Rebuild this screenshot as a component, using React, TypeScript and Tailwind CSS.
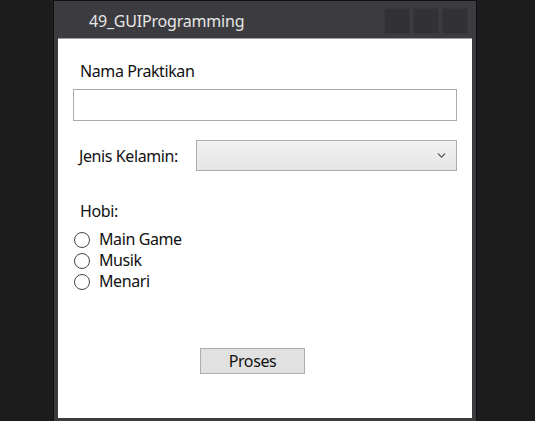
import { ChevronDown } from "lucide-react";

const hobbies = ["Main Game", "Musik", "Menari"];

export default function App() {
  return (
    <div
      className="w-[535px] h-[421px] overflow-hidden bg-[#1c1c1c] flex justify-start"
      style={{ fontFamily: '"Noto Sans", "Open Sans", sans-serif' }}
    >
      {/* Window */}
      <div className="ml-[53px] w-[424px] h-[440px] shrink-0 flex flex-col bg-[#3c3c40] border-x border-t border-[#111113]">
        {/* Title bar */}
        <div className="h-[37px] flex items-start shrink-0">
          <div className="ml-[35px] mt-[10px] text-[16px] leading-[20px] tracking-[-0.2px] text-[#e6e6e6]">
            49_GUIProgramming
          </div>
          <div className="ml-auto mr-[8px] mt-[7px] flex gap-[3px]">
            {[0, 1, 2].map((i) => (
              <div
                key={i}
                className="w-[26px] h-[26px] bg-[#323236] border border-[#38383c]"
              />
            ))}
          </div>
        </div>

        {/* Client area */}
        <div className="mx-[4px] h-[380px] bg-white border-t border-[#a0a0a0] flex flex-col text-[16px] tracking-[-0.4px] text-[#111]">
          <div className="ml-[22px] mt-[21px] leading-[22px]">Nama Praktikan</div>
          <div className="ml-[15px] mt-[7px] w-[384px] h-[32px] border border-[#ababab] bg-white" />

          <div className="mt-[19px] flex items-center">
            <div className="ml-[21px] w-[117px] leading-[22px]">Jenis Kelamin:</div>
            <div className="w-[261px] h-[31px] border border-[#acacac] bg-gradient-to-b from-[#f2f2f2] to-[#e5e5e5] flex items-center justify-end pr-[8px]">
              <ChevronDown className="w-[13px] h-[13px] text-[#555]" strokeWidth={2.5} />
            </div>
          </div>

          <div className="ml-[22px] mt-[29px] leading-[22px]">Hobi:</div>
          <div className="ml-[16px] mt-[7px] flex flex-col">
            {hobbies.map((h) => (
              <div key={h} className="h-[21px] flex items-center gap-[9px]">
                <div className="w-[16px] h-[16px] rounded-full border border-[#444] bg-white" />
                <span className="leading-[21px]">{h}</span>
              </div>
            ))}
          </div>

          <div className="mt-[56px] ml-[142px] w-[105px] h-[26px] border border-[#adadad] bg-[#e1e1e1] flex items-center justify-center leading-[22px]">
            Proses
          </div>
        </div>
      </div>
    </div>
  );
}
